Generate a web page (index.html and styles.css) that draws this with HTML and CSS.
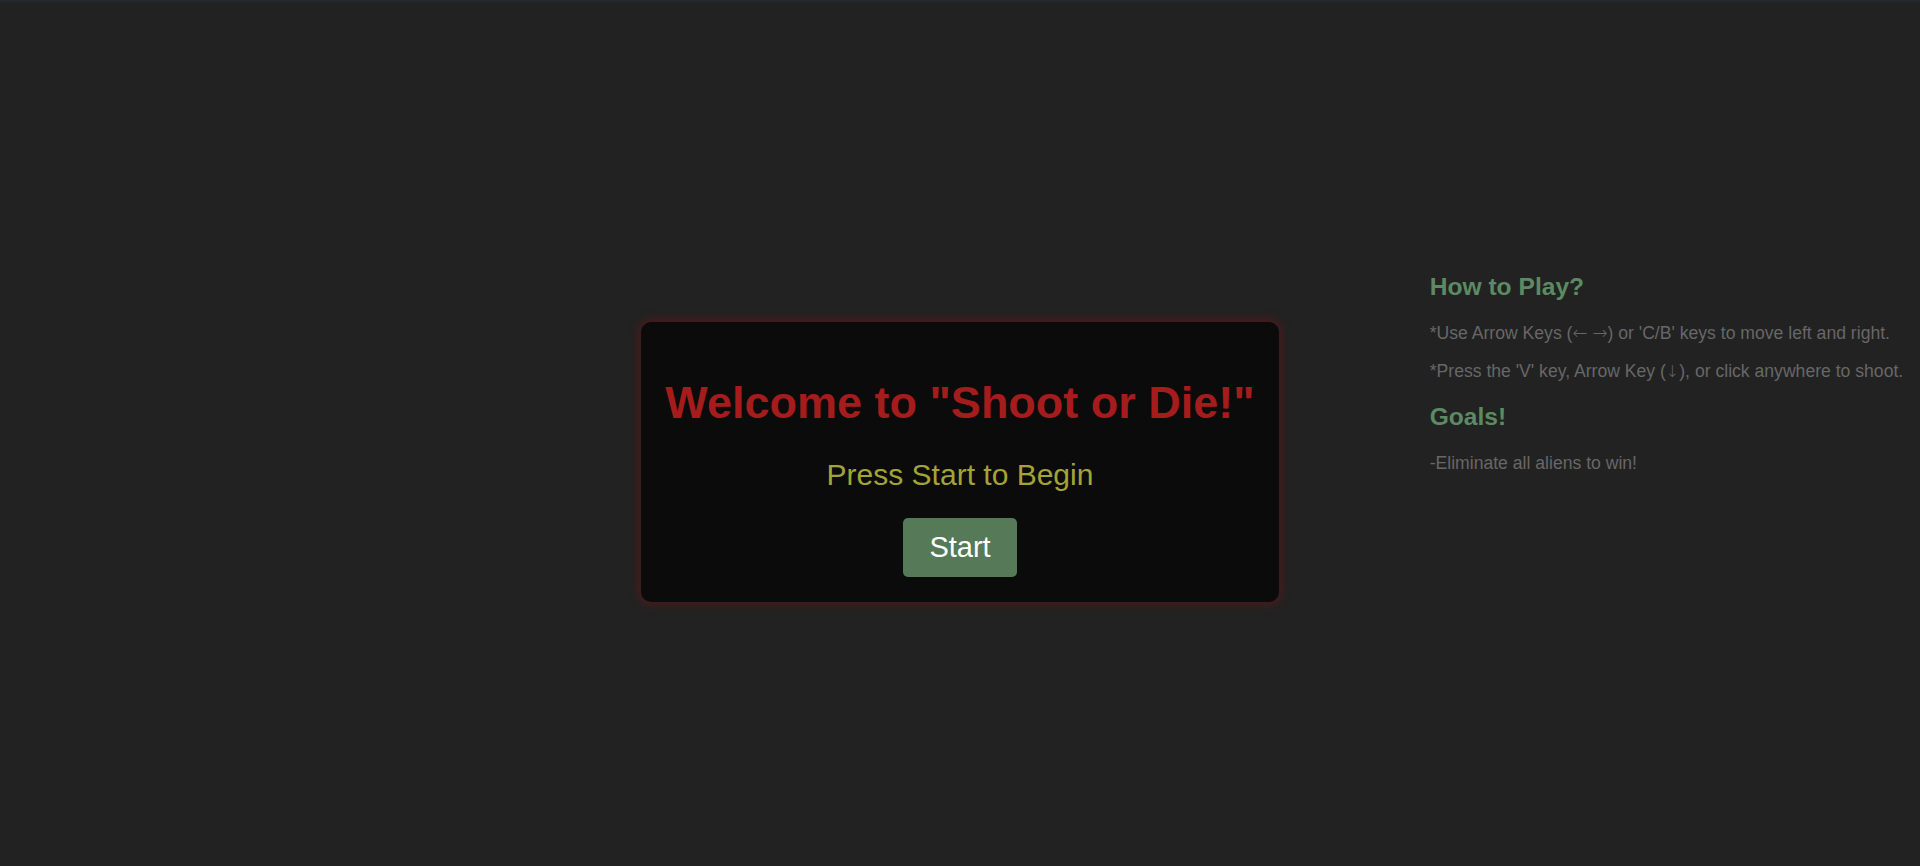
FILE: index.html
```html
<!DOCTYPE html>
<html lang="en">
<head>
<meta charset="utf-8">
<title>Shoot or Die!</title>
<link rel="stylesheet" href="styles.css">
</head>
<body>
<div class="topbar"></div>
<main class="stage">
  <div class="side-left"></div>
  <section class="modal">
    <h1 class="modal-title">Welcome to "Shoot or Die!"</h1>
    <p class="modal-sub">Press Start to Begin</p>
    <button class="start-btn">Start</button>
  </section>
  <aside class="instructions">
    <h2 class="ins-title">How to Play?</h2>
    <p class="ins-text">*Use Arrow Keys (<span class="arrow">←</span> <span class="arrow">→</span>) or 'C/B' keys to move left and right.</p>
    <p class="ins-text">*Press the 'V' key, Arrow Key (<span class="arrow arrow-down">↓</span>), or click anywhere to shoot.</p>
    <h2 class="ins-title">Goals!</h2>
    <p class="ins-text">-Eliminate all aliens to win!</p>
  </aside>
</main>
</body>
</html>
```
FILE: styles.css
```css
html, body {
  margin: 0;
  padding: 0;
}
body {
  background: #222222;
  font-family: "Liberation Sans", Arial, sans-serif;
  height: 866px;
  overflow: hidden;
}
.topbar {
  height: 2px;
  background: #25282c;
}
.stage {
  display: grid;
  grid-template-columns: 1fr auto 1fr;
  align-items: start;
  padding-top: 249px;
}
.modal {
  margin-top: 71px;
  background: #0b0b0b;
  border-radius: 10px;
  padding: 24px 24px 25px;
  text-align: center;
  box-shadow: 0 0 10px 2px rgba(120, 20, 20, 0.55);
}
.modal-title {
  margin: 31px 0 0;
  font-size: 45px;
  line-height: 52px;
  font-weight: bold;
  color: #a51c1c;
  white-space: nowrap;
}
.modal-sub {
  margin: 29px 0 0;
  font-size: 30px;
  line-height: 34px;
  color: #a3a336;
}
.start-btn {
  margin-top: 26px;
  font-family: "Liberation Sans", Arial, sans-serif;
  font-size: 29px;
  line-height: 33px;
  color: #ffffff;
  background: #567a58;
  border: none;
  border-radius: 5px;
  padding: 13px 26px;
  cursor: pointer;
}
.instructions {
  padding-left: 151px;
}
.ins-title {
  margin: 22px 0;
  font-size: 24.6px;
  line-height: 28px;
  font-weight: bold;
  color: #5b8a63;
}
.ins-text {
  margin: 17.6px 0;
  font-size: 17.6px;
  line-height: 20px;
  color: #676767;
  white-space: nowrap;
}
.arrow {
  font-family: "DejaVu Sans", sans-serif;
  font-weight: 200;
  font-size: 18px;
  line-height: 1;
}
.arrow-down {
  font-size: 16px;
}
```
